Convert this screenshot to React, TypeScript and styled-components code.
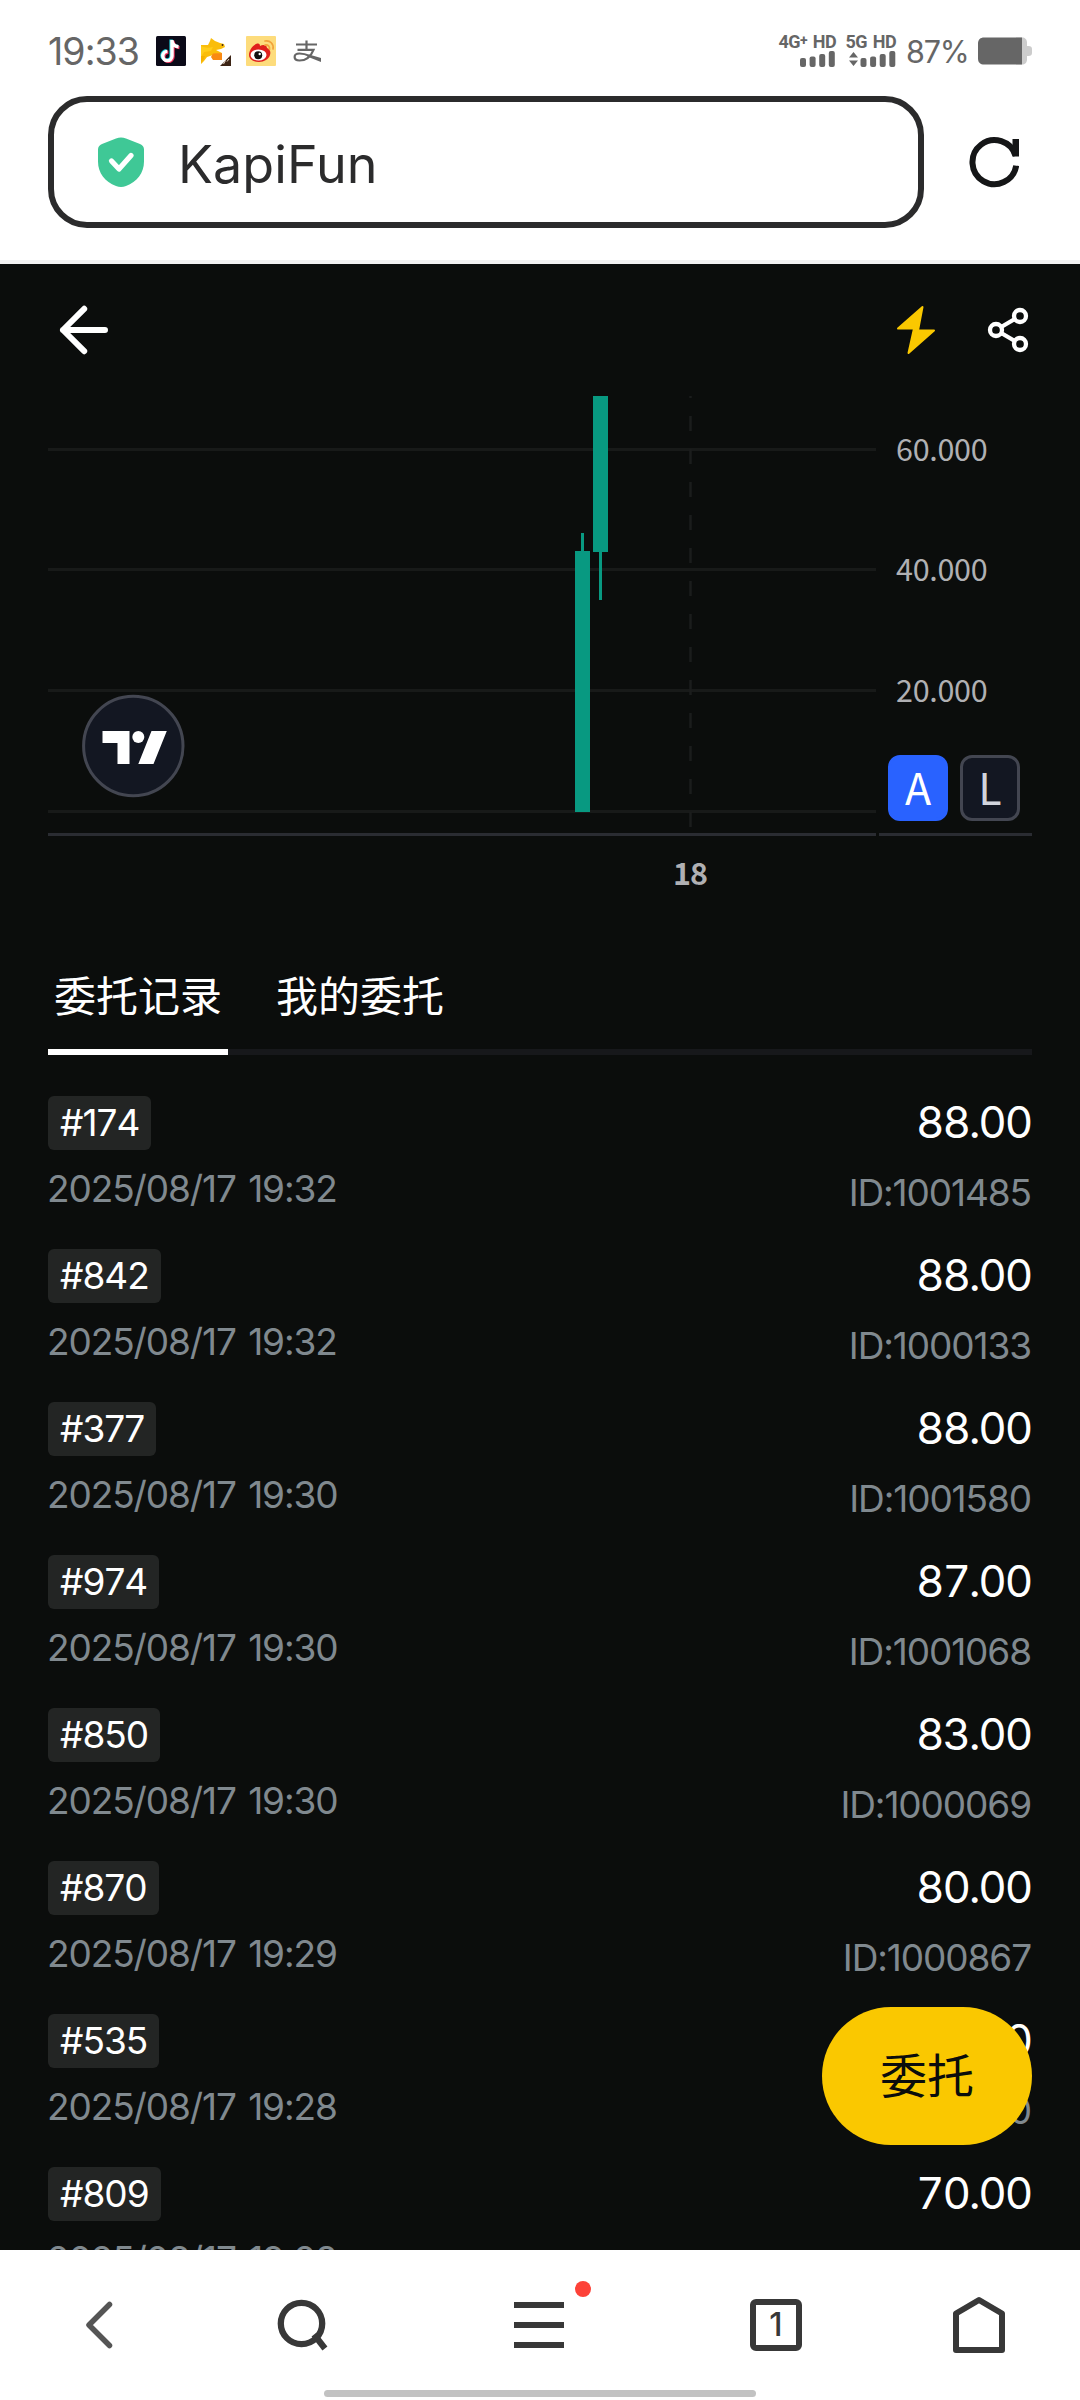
import React from 'react';
import styled, { createGlobalStyle } from 'styled-components';

const latin = `Inter, 'Noto Sans CJK SC', sans-serif`;
const cjk = `'Noto Sans CJK SC', sans-serif`;

const GlobalStyle = createGlobalStyle`
  *, *::before, *::after { box-sizing: border-box; }
  body { margin: 0; background: #fff; font-family: ${latin}; }
  svg { display: block; flex: none; }
`;

const Screen = styled.div`
  width: 1080px;
  height: 2400px;
  display: flex;
  flex-direction: column;
  overflow: hidden;
  background: #fff;
`;

/* ---------- status bar ---------- */

const StatusBar = styled.div`
  height: 96px;
  padding: 6px 48px 0 48px;
  display: flex;
  align-items: center;
  color: #666;
  flex: none;
`;

const Clock = styled.span`
  width: 108px;
  font-size: 37.5px;
  letter-spacing: -0.9px;
  white-space: nowrap;
`;

const AppIcons = styled.div`
  display: flex;
  align-items: center;
  gap: 15px;
`;

const StatusRight = styled.div`
  margin-left: auto;
  display: flex;
  align-items: center;
`;

const Signal = styled.div<{ $width: number; $gap: number }>`
  width: ${(p) => p.$width}px;
  margin-right: ${(p) => p.$gap}px;
  display: flex;
  flex-direction: column;
  align-items: flex-end;
  gap: 3px;
`;

const SignalLabel = styled.span`
  height: 13px;
  font-family: Roboto, sans-serif;
  font-weight: 700;
  font-size: 18px;
  line-height: 13px;
  letter-spacing: -0.6px;
  word-spacing: 2px;
  white-space: nowrap;

  sup {
    font-size: 14px;
    line-height: 0;
    vertical-align: 3px;
  }
`;

const Percent = styled.span`
  width: 72px;
  font-size: 30.5px;
  letter-spacing: -1.2px;
  white-space: nowrap;
`;

/* ---------- address bar ---------- */

const AddressBar = styled.div`
  height: 168px;
  padding: 0 61px 0 48px;
  display: flex;
  justify-content: space-between;
  align-items: flex-start;
  border-bottom: 4px solid #f2f2f2;
  flex: none;
`;

const AddressField = styled.div`
  width: 876px;
  height: 132px;
  padding-left: 44px;
  display: flex;
  align-items: center;
  gap: 34px;
  border: 6px solid #2b2b2c;
  border-radius: 39px;
`;

const SiteName = styled.span`
  padding-top: 6px;
  font-size: 52px;
  letter-spacing: 0.1px;
  line-height: 60px;
  color: #2b2b2c;
`;

const ReloadButton = styled.div`
  padding-top: 40px;
`;

/* ---------- page ---------- */

const Page = styled.main`
  position: relative;
  height: 1986px;
  padding: 0 48px;
  display: flex;
  flex-direction: column;
  overflow: hidden;
  background: #0b0d0c;
  flex: none;
`;

const PageHeader = styled.header`
  height: 132px;
  padding: 0 1px 0 9px;
  display: flex;
  align-items: center;
  justify-content: space-between;
  flex: none;
`;

const HeaderActions = styled.div`
  display: flex;
  align-items: center;
  gap: 51px;
`;

const Chart = styled.section`
  position: relative;
  height: 540px;
  flex: none;
`;

const ScaleButtons = styled.div`
  position: absolute;
  left: 840px;
  top: 359px;
  display: flex;
  gap: 12px;
`;

const ScaleButton = styled.div<{ $active?: boolean }>`
  width: 60px;
  height: 66px;
  padding-bottom: 5px;
  display: flex;
  align-items: center;
  justify-content: center;
  border: 3px solid ${(p) => (p.$active ? '#2962ff' : '#434651')};
  border-radius: 12px;
  background: ${(p) => (p.$active ? '#2962ff' : '#131722')};
  color: ${(p) => (p.$active ? '#fff' : '#d1d4dc')};
  font-family: ${cjk};
  font-size: 43px;
  line-height: 60px;
`;

const Tabs = styled.nav`
  height: 119px;
  display: flex;
  gap: 42px;
  box-shadow: inset 0 -6px #17181b;
  flex: none;
`;

const Tab = styled.div<{ $active?: boolean }>`
  height: 119px;
  padding: 28px 6px 0;
  border-bottom: 6px solid ${(p) => (p.$active ? '#fff' : 'transparent')};
  color: #fff;
  font-family: ${cjk};
  font-size: 42px;
  line-height: 60px;
  white-space: nowrap;
`;

const Records = styled.div`
  padding-top: 41px;
  font-kerning: none;
`;

const Record = styled.div`
  height: 153px;
  display: flex;
  justify-content: space-between;
`;

const RecordLeft = styled.div`
  display: flex;
  flex-direction: column;
  align-items: flex-start;
  gap: 15px;
`;

const RecordRight = styled.div`
  padding-right: 1px;
  display: flex;
  flex-direction: column;
  align-items: flex-end;
  gap: 20px;
`;

const Tag = styled.span`
  padding: 0 12px;
  border-radius: 6px;
  background: #232524;
  color: #fff;
  font-size: 37px;
  line-height: 54px;
  letter-spacing: -1px;
`;

const Meta = styled.span`
  margin-left: -1px;
  color: #80898f;
  font-size: 37px;
  line-height: 48px;
  letter-spacing: -1.1px;
  word-spacing: 3px;
  white-space: nowrap;
`;

const Amount = styled.span`
  height: 53px;
  color: #fff;
  font-size: 44px;
  font-variant-numeric: tabular-nums;
  line-height: 53px;
  letter-spacing: -2.2px;
`;

const OrderButton = styled.button`
  position: absolute;
  right: 48px;
  bottom: 105px;
  width: 210px;
  height: 138px;
  padding: 0 0 7px;
  border: 0;
  border-radius: 69px;
  background: #fac800;
  color: #0b0d0c;
  font-family: ${cjk};
  font-size: 47px;
  line-height: 60px;
`;

/* ---------- bottom navigation ---------- */

const BottomNav = styled.nav`
  height: 140px;
  display: grid;
  grid-template-columns: 198px 207px 268px 206px 200px;
  align-items: center;
  justify-items: center;
  padding-top: 10px;
  flex: none;
`;

const MenuIcon = styled.div`
  position: relative;
  width: 50px;
  height: 46px;
  display: flex;
  flex-direction: column;
  justify-content: space-between;
`;

const MenuLine = styled.span`
  height: 6px;
  background: #383838;
`;

const RedDot = styled.span`
  position: absolute;
  right: -27px;
  top: -21px;
  width: 16px;
  height: 16px;
  border-radius: 50%;
  background: #fd4238;
`;

const TabCount = styled.div`
  width: 52px;
  height: 52px;
  display: flex;
  align-items: center;
  justify-content: center;
  border: 6px solid #383838;
  border-radius: 6px;
  color: #383838;
  font-size: 32px;
  font-weight: 500;
  line-height: 40px;
`;

const HomeIndicator = styled.div`
  align-self: center;
  width: 432px;
  height: 7px;
  border-radius: 4px;
  background: #c2c2c2;
  flex: none;
`;

/* ---------- drawings ---------- */

const DouyinIcon = () => (
  <svg width="30" height="30" viewBox="0 0 30 30" fill="none">
    <rect width="30" height="30" rx="1.5" fill="#0b0a18" />
    <g strokeWidth="3.4">
      <path d="M16 4v16a4.6 4.6 0 1 1-4.6-4.6M16 5c.5 3.3 3 5.5 6.5 5.8" stroke="#25d5e0" transform="translate(-.9 -.6)" />
      <path d="M16 4v16a4.6 4.6 0 1 1-4.6-4.6M16 5c.5 3.3 3 5.5 6.5 5.8" stroke="#f0325c" transform="translate(1 .8)" />
      <path d="M16 4v16a4.6 4.6 0 1 1-4.6-4.6M16 5c.5 3.3 3 5.5 6.5 5.8" stroke="#fff" />
    </g>
  </svg>
);

const KangarooIcon = () => (
  <svg width="30" height="30" viewBox="0 0 30 30">
    <path d="M0 9h7l2-4 1-3 4 3 5 2 4 1 1 3-4 2-5 1 6 3-9 2-6 2-3 4-3 3z" fill="#fabd0b" />
    <path d="M0 10c4 2 8 2 12 1l-2 4-7 1-3 5z" fill="#ffcd1b" />
    <path d="M12 17.500l9-.5v7h-9l-2-3z" fill="#f98a13" />
    <path d="M0 20v6l3-3 1-3z" fill="#f5b000" />
    <path d="M30 19v11H19z" fill="#3c2415" />
    <path d="M22.500 28l2-3.500M26 25.500l2-2.500" stroke="#e8d8c8" strokeWidth="1" />
    <circle cx="21.500" cy="9" r=".9" fill="#3c2415" />
  </svg>
);

const WeiboIcon = () => (
  <svg width="30" height="30" viewBox="0 0 30 30" fill="none">
    <rect width="30" height="30" rx="1" fill="#fddc7c" />
    <path d="M3 19c0-4 3-9 7-11 3-1 4 0 4 2 3-2 7-1 7 2 3 1 4 4 3 7-1 4-6 7-11 7-6 0-10-3-10-7z" fill="#e0201c" />
    <ellipse cx="12.500" cy="19" rx="8" ry="5.500" fill="#fff" />
    <circle cx="12.200" cy="19.300" r="4" fill="#111" />
    <circle cx="13.700" cy="18" r="1.200" fill="#fff" />
    <path d="M19 9c3-.5 5 1.500 4.500 4.500M19 5c5-1 9 3 8 8" stroke="#f2a33a" strokeWidth="1.700" strokeLinecap="round" />
  </svg>
);

const AlipayIcon = () => (
  <svg width="30" height="30" viewBox="0 0 30 30" fill="none" stroke="#666">
    <path d="M5 8.500h21M15.500 4.500v9.500M6.500 13.800h16c-2 5-6.500 10.700-14 10.700-6.500 0-6.500-7 0-7 3.500 0 7 1 10.500 2.500" strokeWidth="2.200" />
    <path d="M18 18.500l12 3.500v4l-14-5.500z" fill="#666" stroke="none" />
  </svg>
);

const bars = (x: number) =>
  [9, 10.5, 13, 16].map((h, i) => (
    <rect key={i} x={x + i * 9.6} y={16 - h} width="6" height={h} rx="2" fill="#666" />
  ));

const BatteryIcon = () => (
  <svg width="54" height="28" viewBox="0 0 54 28">
    <path d="M38 .5h6c3 0 5 2 5 5V9h1.500q3.500 0 3.500 3v4q0 3-3.500 3H49v3.500c0 3-2 5-5 5h-6z" fill="#ccc" />
    <path d="M6 .5h38v27H6c-3.500 0-6-2-6-6v-15c0-4 2.500-6 6-6z" fill="#666" />
  </svg>
);

const ShieldIcon = () => (
  <svg width="46" height="50" viewBox="0 0 46 50" fill="none">
    <path d="M18 1.500q5-2 10 0l14 5.500q4 1.500 4 5.500v12C46 36 39 45 28 49q-5 2-10 0C7 45 0 36 0 24.500v-12Q0 8.500 4 7z" fill="#3fc896" />
    <path d="M13.500 24l7.500 8 12-13.500" stroke="#fff" strokeWidth="5.200" strokeLinecap="round" strokeLinejoin="round" />
  </svg>
);

const ReloadIcon = () => (
  <svg width="50" height="52" viewBox="0 0 50 52" fill="none">
    <path d="M47.200 29.600A22 22 0 1 1 46.600 20" stroke="#151617" strokeWidth="6" />
    <path d="M43.500 3H50v17.500h-6l-3-8 2.500-.5z" fill="#151617" />
  </svg>
);

const BackArrow = () => (
  <svg width="54" height="54" viewBox="0 0 54 54" fill="none" stroke="#fff" strokeWidth="6" strokeLinecap="round" strokeLinejoin="round">
    <path d="M27.200 5.800L6 27l21.200 21.200M6 27h42" />
  </svg>
);

const BoltIcon = () => (
  <svg width="40" height="50" viewBox="0 0 40 50">
    <path d="M26.500 2L2 23.500h16L12.500 48 38 25.500H22z" fill="#fac800" stroke="#fac800" strokeWidth="2" strokeLinejoin="round" />
  </svg>
);

const ShareIcon = () => (
  <svg width="44" height="48" viewBox="0 0 44 48" fill="none" stroke="#fff" strokeWidth="4.300">
    <circle cx="9" cy="24" r="6" />
    <circle cx="33" cy="10" r="6" />
    <circle cx="33" cy="38" r="6" />
    <path d="M14.200 21L27.800 13M14.200 27L27.800 35" />
  </svg>
);

const priceLines = [
  { y: 53.5, label: '60.000' },
  { y: 173.5, label: '40.000' },
  { y: 294.5, label: '20.000' },
  { y: 415.5, label: '' },
];

const PriceChart = () => (
  <svg width="984" height="540" viewBox="0 0 984 540">
    {priceLines.map((l) => (
      <rect key={l.y} x="0" y={l.y - 1.5} width="828" height="3" fill="#181a19" />
    ))}
    <path d="M642.500 0V431" stroke="#1b1d1c" strokeWidth="2.500" strokeDasharray="15 18" strokeDashoffset="13" />
    <path d="M0 438.500h828M831 438.500h153" stroke="#2a2c32" strokeWidth="3" />
    <g fill="#089981">
      <rect x="533" y="137" width="3" height="20" />
      <rect x="527" y="155" width="15" height="261" />
      <rect x="545" y="0" width="15" height="156" />
      <rect x="551" y="156" width="3" height="48" />
    </g>
    <g fill="#b0b0b3" fontFamily="Noto Sans CJK SC, sans-serif" fontSize="30.500">
      {priceLines.map((l) => (
        <text key={l.y} x="848" y={l.y + 11.5} letterSpacing="-0.300">
          {l.label}
        </text>
      ))}
      <text x="642" y="489" textAnchor="middle" fontWeight="700" letterSpacing="-1">
        18
      </text>
    </g>
    <circle cx="85.300" cy="350" r="49.700" fill="#131722" stroke="#434651" strokeWidth="3" />
    <path d="M54.500 335h27v33h-12v-21h-15zM103.500 335h15.300l-13.300 33H90.300z" fill="#fff" />
    <circle cx="90.300" cy="341" r="6" fill="#fff" />
  </svg>
);

const NavBack = () => (
  <svg width="28" height="50" viewBox="0 0 28 50" fill="none" stroke="#555" strokeWidth="5.500" strokeLinecap="round" strokeLinejoin="round">
    <path d="M24.500 4.500L4 25l20.500 20.500" />
  </svg>
);

const NavSearch = () => (
  <svg width="52" height="52" viewBox="0 0 52 52" fill="none" stroke="#383838" strokeWidth="6.300">
    <circle cx="25.500" cy="24.500" r="20.700" />
    <path d="M40 38l7 9" strokeLinecap="square" />
  </svg>
);

const NavHome = () => (
  <svg width="52" height="60" viewBox="0 0 52 60" fill="none" stroke="#383838" strokeWidth="6" strokeLinejoin="round">
    <path d="M3 18.500L26 5l23 13.500V55H3z" />
  </svg>
);

/* ---------- data ---------- */

interface Entry {
  tag: string;
  time: string;
  amount: string;
  id: string;
}

const entries: Entry[] = [
  { tag: '#174', time: '2025/08/17 19:32', amount: '88.00', id: 'ID:1001485' },
  { tag: '#842', time: '2025/08/17 19:32', amount: '88.00', id: 'ID:1000133' },
  { tag: '#377', time: '2025/08/17 19:30', amount: '88.00', id: 'ID:1001580' },
  { tag: '#974', time: '2025/08/17 19:30', amount: '87.00', id: 'ID:1001068' },
  { tag: '#850', time: '2025/08/17 19:30', amount: '83.00', id: 'ID:1000069' },
  { tag: '#870', time: '2025/08/17 19:29', amount: '80.00', id: 'ID:1000867' },
  { tag: '#535', time: '2025/08/17 19:28', amount: '70.00', id: 'ID:1000090' },
  { tag: '#809', time: '2025/08/17 19:28', amount: '70.00', id: '' },
];

export default function App() {
  return (
    <Screen>
      <GlobalStyle />
      <StatusBar>
        <Clock>19:33</Clock>
        <AppIcons>
          <DouyinIcon />
          <KangarooIcon />
          <WeiboIcon />
          <AlipayIcon />
        </AppIcons>
        <StatusRight>
          <Signal $width={58} $gap={11}>
            <SignalLabel>
              4G<sup>+</sup> HD
            </SignalLabel>
            <svg width="36" height="16">{bars(0)}</svg>
          </Signal>
          <Signal $width={49} $gap={10}>
            <SignalLabel>5G HD</SignalLabel>
            <svg width="48" height="16">
              <path d="M1 6.500h9L5.500 1zM1 9.500h9L5.500 15z" fill="#666" />
              {bars(12.5)}
            </svg>
          </Signal>
          <Percent>87%</Percent>
          <BatteryIcon />
        </StatusRight>
      </StatusBar>

      <AddressBar>
        <AddressField>
          <ShieldIcon />
          <SiteName>KapiFun</SiteName>
        </AddressField>
        <ReloadButton>
          <ReloadIcon />
        </ReloadButton>
      </AddressBar>

      <Page>
        <PageHeader>
          <BackArrow />
          <HeaderActions>
            <BoltIcon />
            <ShareIcon />
          </HeaderActions>
        </PageHeader>

        <Chart>
          <PriceChart />
          <ScaleButtons>
            <ScaleButton $active>A</ScaleButton>
            <ScaleButton>L</ScaleButton>
          </ScaleButtons>
        </Chart>

        <Tabs>
          <Tab $active>委托记录</Tab>
          <Tab>我的委托</Tab>
        </Tabs>

        <Records>
          {entries.map((e) => (
            <Record key={e.tag}>
              <RecordLeft>
                <Tag>{e.tag}</Tag>
                <Meta>{e.time}</Meta>
              </RecordLeft>
              <RecordRight>
                <Amount>{e.amount}</Amount>
                {e.id && <Meta>{e.id}</Meta>}
              </RecordRight>
            </Record>
          ))}
        </Records>

        <OrderButton>委托</OrderButton>
      </Page>

      <BottomNav>
        <NavBack />
        <NavSearch />
        <MenuIcon>
          <MenuLine />
          <MenuLine />
          <MenuLine />
          <RedDot />
        </MenuIcon>
        <TabCount>1</TabCount>
        <NavHome />
      </BottomNav>
      <HomeIndicator />
    </Screen>
  );
}
